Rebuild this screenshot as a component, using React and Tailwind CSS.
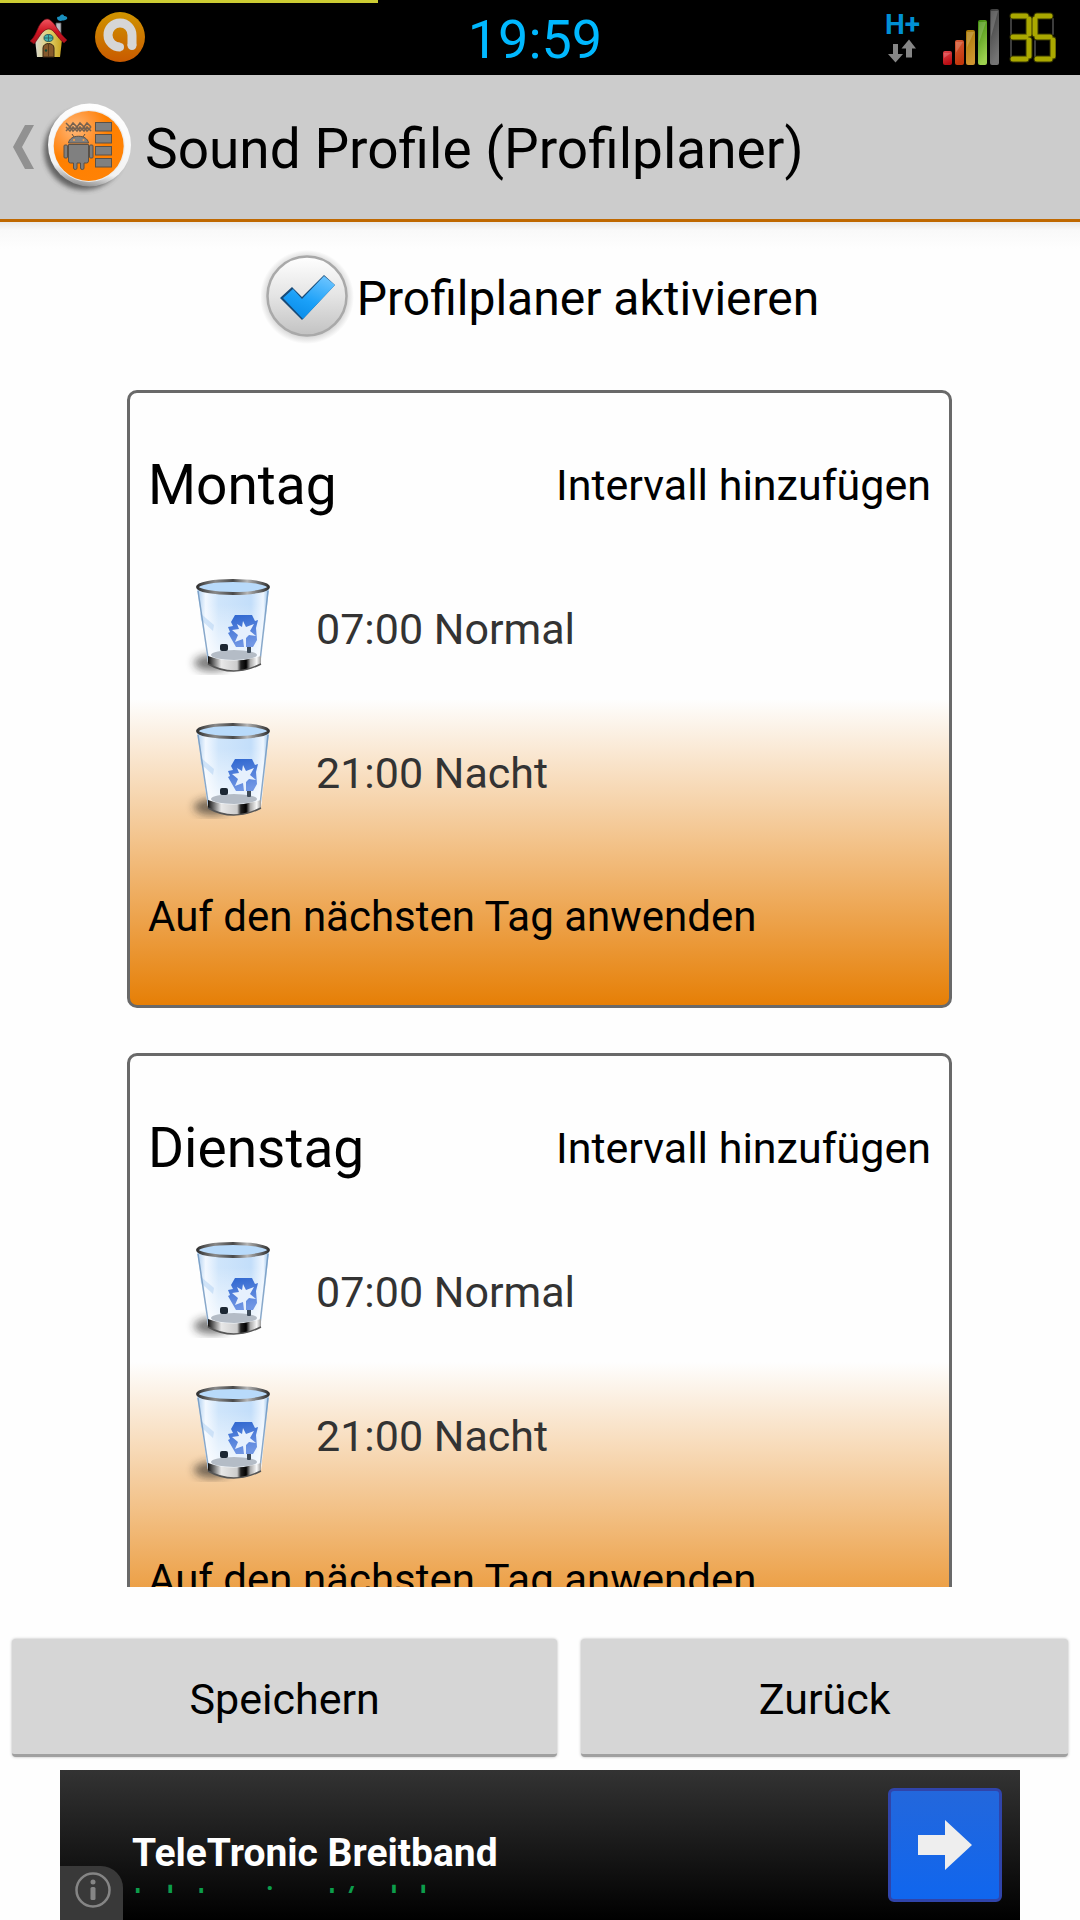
import React from "react";

const DAYS = [
  { name: "Montag", intervals: ["07:00 Normal", "21:00 Nacht"] },
  { name: "Dienstag", intervals: ["07:00 Normal", "21:00 Nacht"] },
];

function HouseIcon() {
  return (
    <svg className="h-12 w-10 shrink-0" viewBox="0 0 40 48" aria-hidden="true">
      <defs>
        <linearGradient id="wall" x1="0" x2="1" y1="0" y2="0">
          <stop offset="0" stopColor="#d8d8d0" />
          <stop offset="0.55" stopColor="#e0cf6a" />
          <stop offset="1" stopColor="#c9a21c" />
        </linearGradient>
        <linearGradient id="roof" x1="0" x2="0" y1="0" y2="1">
          <stop offset="0" stopColor="#ef5560" />
          <stop offset="0.5" stopColor="#cf1522" />
          <stop offset="1" stopColor="#a80f1a" />
        </linearGradient>
      </defs>
      <path d="M27 10l5 0 0 13-5-4z" fill="#b9bcc4" stroke="#555" strokeWidth="0.8" />
      <path d="M28 5c0-2 3-1 3-2 1-2 4-2 4 0 2 0 4 1 3 3-2 2-5 1-6 2-2 0-4-1-4-3z" fill="#1a8fbe" />
      <path d="M6 26L20 13l13 14-2 17H8z" fill="url(#wall)" />
      <path d="M1 28c5-4 6-9 9-15 3-5 7-9 11-6 5 3 8 12 17 20l-3 3c-7-5-10-15-16-14-6 1-9 9-14 15z" fill="url(#roof)" stroke="#6d0c14" strokeWidth="0.7" />
      <ellipse cx="19.500" cy="25" rx="4.500" ry="3.500" fill="#3fb3ae" stroke="#2b5a5c" strokeWidth="1" />
      <path d="M19.500 21.500v7M15 25h9" stroke="#2b5a5c" strokeWidth="0.8" />
      <path d="M14 44v-9c0-6 11-6 11 0v9z" fill="#85592b" stroke="#3a2712" strokeWidth="1" />
      <path d="M19.500 31v13" stroke="#5b3a18" strokeWidth="1" />
      <circle cx="17" cy="37.500" r="1.200" fill="#0f4a35" />
    </svg>
  );
}

function RoundAppIcon() {
  return (
    <svg className="size-[50px] shrink-0" viewBox="0 0 50 50" aria-hidden="true">
      <defs>
        <linearGradient id="amber" x1="0" x2="0" y1="0" y2="1">
          <stop offset="0" stopColor="#cf9400" />
          <stop offset="1" stopColor="#c95a00" />
        </linearGradient>
      </defs>
      <circle cx="25" cy="25" r="25" fill="url(#amber)" />
      <path d="M25.500 35A12 12 0 1 1 37 23.500v10" fill="none" stroke="#d6d6d6" strokeWidth="9" />
      <circle cx="25" cy="35" r="4" fill="#d6d6d6" />
      <circle cx="37" cy="33.500" r="4.500" fill="#d6d6d6" />
    </svg>
  );
}

function DataArrows() {
  return (
    <svg className="h-6 w-7" viewBox="0 0 28 24" fill="#868686" aria-hidden="true">
      <path d="M5 5h5v10h5L7.500 23.500 0 15h5z" />
      <path d="M18 18.500h6V9.500h4L21 0.500 13.500 9.500H18z" />
    </svg>
  );
}

function SignalIcon() {
  const bars = [
    [1, 42, 14, "#e0484c", "#b80c12"],
    [13, 31, 25, "#d85c38", "#c2370c"],
    [24, 21, 35, "#a87804", "#cf9530"],
    [36, 11, 45, "#3f8a0c", "#9cd04e"],
    [48, 0, 56, "#3a3a3a", "#747474"],
  ];
  return (
    <svg className="h-14 w-[58px] shrink-0" viewBox="0 0 58 56" role="img" aria-label="Signal">
      <defs>
        {bars.map(([x, , , a, b]) => (
          <linearGradient key={x} id={`bar${x}`} x1="0" x2="0.3" y1="0" y2="1">
            <stop offset="0" stopColor={a} />
            <stop offset="1" stopColor={b} />
          </linearGradient>
        ))}
      </defs>
      {bars.map(([x, y, h]) => (
        <g key={x}>
          <rect x={x} y={y} width="9" height={h} rx="2" fill={`url(#bar${x})`} />
          <path d={`M${x + 1} ${y + 2}h7L${x + 1} ${y + h * 0.5}z`} fill="#fff" opacity="0.18" />
        </g>
      ))}
    </svg>
  );
}

function BatteryDisplay() {
  const on = [
    [5, 4, 18, 4], [5, 25, 18, 25], [5, 47, 18, 47], [21, 7, 21, 22], [21, 28, 21, 44],
    [29, 4, 42, 4], [29, 25, 42, 25], [29, 47, 42, 47], [27, 7, 27, 22], [45, 28, 45, 44],
  ];
  const off = [
    [3, 7, 3, 22], [3, 28, 3, 44], [27, 29, 27, 44], [45, 7, 45, 22],
  ];
  return (
    <svg className="h-[51px] w-12 shrink-0" viewBox="0 0 48 51" role="img" aria-label="35 %">
      <g stroke="#3c3c3c" strokeWidth="2" strokeLinecap="round">
        {off.map(([a, b, c, d]) => <line key={`${a}-${b}`} x1={a} y1={b} x2={c} y2={d} />)}
      </g>
      <g stroke="#5b5a00" strokeWidth="7" strokeLinecap="round" opacity="0.6">
        {on.map(([a, b, c, d]) => <line key={`${a}-${b}`} x1={a} y1={b} x2={c} y2={d} />)}
      </g>
      <g stroke="#aaa800" strokeWidth="5" strokeLinecap="round">
        {on.map(([a, b, c, d]) => <line key={`${a}-${b}`} x1={a} y1={b} x2={c} y2={d} />)}
      </g>
    </svg>
  );
}

function StatusBar() {
  return (
    <div className="shrink-0 bg-black">
      <div className="h-[3px] w-[35%] bg-[#cccc33]" />
      <div className="grid h-[72px] grid-cols-[1fr_auto_1fr] items-center pb-1">
        <div className="flex items-center gap-[26px] pl-[29px]">
          <HouseIcon />
          <RoundAppIcon />
        </div>
        <time className="pt-[6px] pr-[10px] text-[54px] leading-[60px] text-[#00b8ff]">19:59</time>
        <div className="flex items-center justify-end gap-2 pr-6">
          <div className="mr-[14px] flex flex-col items-center">
            <span className="text-[28px] leading-7 font-bold text-[#0090d4]">H+</span>
            <DataArrows />
          </div>
          <SignalIcon />
          <BatteryDisplay />
        </div>
      </div>
    </div>
  );
}

function AppLogo() {
  return (
    <svg className="size-24" viewBox="0 2 96 96" aria-hidden="true">
      <defs>
        <radialGradient id="orange" cx="0.3" cy="0.25" r="0.8">
          <stop offset="0" stopColor="#ffb878" />
          <stop offset="0.35" stopColor="#ff9433" />
          <stop offset="0.6" stopColor="#ff8000" />
          <stop offset="1" stopColor="#ff8205" />
        </radialGradient>
        <linearGradient id="ring" x1="0.6" x2="0.4" y1="0" y2="1">
          <stop offset="0" stopColor="#ffffff" />
          <stop offset="0.8" stopColor="#f2f2f2" />
          <stop offset="1" stopColor="#8c8c8c" />
        </linearGradient>
        <filter id="soft" x="-20%" y="-20%" width="140%" height="140%">
          <feGaussianBlur stdDeviation="2.500" />
        </filter>
      </defs>
      <circle cx="44" cy="53" r="40" fill="#4a4a4a" opacity="0.8" filter="url(#soft)" />
      <circle cx="49.500" cy="48" r="41.500" fill="url(#ring)" />
      <circle cx="49" cy="49" r="36" fill="#ececec" />
      <circle cx="48.700" cy="49" r="35" fill="url(#orange)" />
      <g transform="translate(0 -1)">
        <g fill="none" stroke="#77624f" strokeWidth="1.500">
          <path d="M26 27l4 4 3-4 4 4 3-4 4 4 3-4 4 4" />
          <path d="M26 31l4 4 3-4 4 4 3-4 4 4 3-4 4 4" />
          <path d="M26 35l4-4 3 4 4-4 3 4 4-4 3 4 4-4" />
        </g>
        <g fill="#808080" stroke="#5a5148" strokeWidth="1">
          <rect x="55.500" y="26.500" width="16" height="8.500" />
          <rect x="55.500" y="38.500" width="16" height="8.500" />
          <rect x="55.500" y="50.500" width="16" height="8.500" />
          <rect x="55.500" y="62.500" width="16" height="8.500" />
          <path d="M28.500 47c1-9 19-9 20 0z" />
          <path d="M28.500 48.500h20V65q0 2-2 2H44v5q0 1.500-1.700 1.500T40.500 72v-5H37v5q0 1.500-1.700 1.500T33.500 72v-5h-3q-2 0-2-2z" />
          <rect x="24" y="49" width="3.500" height="13" rx="1" />
          <rect x="49.500" y="49" width="3.500" height="13" rx="1" />
          <path d="M32 38l2 3M45 38l-2 3" fill="none" />
        </g>
        <circle cx="34" cy="44" r="1" fill="#ff9e40" />
        <circle cx="43.500" cy="44" r="1" fill="#ff9e40" />
      </g>
    </svg>
  );
}

function TrashIcon({ id }) {
  return (
    <svg className="size-24" viewBox="0 0 96 96" aria-hidden="true">
      <defs>
        <linearGradient id={`${id}-body`} x1="0" x2="1" y1="0" y2="0">
          <stop offset="0" stopColor="#a9ccef" />
          <stop offset="0.12" stopColor="#f2f8ff" />
          <stop offset="0.3" stopColor="#cfe5fb" />
          <stop offset="0.75" stopColor="#c3defa" />
          <stop offset="0.92" stopColor="#eef6ff" />
          <stop offset="1" stopColor="#8fbde8" />
        </linearGradient>
        <linearGradient id={`${id}-fade`} x1="0" x2="0" y1="0" y2="1">
          <stop offset="0.2" stopColor="#fff" stopOpacity="0" />
          <stop offset="0.9" stopColor="#fff" stopOpacity="0.8" />
        </linearGradient>
        <linearGradient id={`${id}-rim`} x1="0" x2="1" y1="0" y2="0">
          <stop offset="0" stopColor="#333" />
          <stop offset="0.25" stopColor="#8a8a8a" />
          <stop offset="0.5" stopColor="#4a4a4a" />
          <stop offset="0.7" stopColor="#b5b5b5" />
          <stop offset="1" stopColor="#333" />
        </linearGradient>
        <linearGradient id={`${id}-base`} x1="0" x2="1" y1="0" y2="0">
          <stop offset="0" stopColor="#111" />
          <stop offset="0.12" stopColor="#777" />
          <stop offset="0.25" stopColor="#e8e8e8" />
          <stop offset="0.55" stopColor="#ccc" />
          <stop offset="0.62" stopColor="#222" />
          <stop offset="0.72" stopColor="#000" />
          <stop offset="0.8" stopColor="#aaa" />
          <stop offset="0.92" stopColor="#f8f8f8" />
          <stop offset="1" stopColor="#999" />
        </linearGradient>
        <linearGradient id={`${id}-blue`} x1="0" x2="0.2" y1="0" y2="1">
          <stop offset="0" stopColor="#2e66cf" />
          <stop offset="1" stopColor="#7096e4" />
        </linearGradient>
        <filter id={`${id}-blur`} x="-50%" y="-50%" width="200%" height="200%">
          <feGaussianBlur stdDeviation="4" />
        </filter>
      </defs>
      <ellipse cx="28" cy="84" rx="18" ry="8" fill="#222" opacity="0.6" filter={`url(#${id}-blur)`} />
      <path d="M13 9L24 84q26 13 53 0L85 9z" fill={`url(#${id}-body)`} />
      <path d="M13 9L24 84q26 13 53 0L85 9z" fill={`url(#${id}-fade)`} />
      <path d="M16 34l14 12-1 6-12-11z" fill="#b9d5f4" opacity="0.6" />
      <ellipse cx="50" cy="76" rx="23" ry="5" fill="#b4bcc6" />
      <path d="M14 12l10.500 70M84 12l-8 70" stroke="#6d93bd" strokeWidth="1.500" fill="none" opacity="0.8" />
      <rect x="36" y="65" width="8" height="7" rx="2" fill="#1c2733" />
      <rect x="63" y="66" width="4" height="8" rx="1" fill="#3d4a58" />
      <path d="M51 36h17l3 6 3-1-2 8 1 12-4 7H52l-8-14 2-1-2-5 5-1-2-4z" fill={`url(#${id}-blue)`} />
      <path d="M59 42l3 6 8-3-4 7 6 5-7-1-3 3 0 9h-2l-1-8-8 3 3-7-6-5 7-1-2-5 5 3z" fill="#e6f0fd" />
      <path d="M24 77q25 9 53 0v8q-25 14-53 0z" fill={`url(#${id}-base)`} />
      <path d="M24 85q25 14 53 0" fill="none" stroke="#555" strokeWidth="1.500" />
      <ellipse cx="49" cy="8" rx="35.500" ry="6.500" fill="#b8dafa" stroke={`url(#${id}-rim)`} strokeWidth="3" />
    </svg>
  );
}

function CheckMark() {
  return (
    <svg className="pointer-events-none col-start-1 row-start-1 size-24" viewBox="0 0 96 96" aria-hidden="true">
      <defs>
        <linearGradient id="disc" x1="0" x2="0" y1="0" y2="1">
          <stop offset="0" stopColor="#ffffff" />
          <stop offset="0.5" stopColor="#e4e4e4" />
          <stop offset="1" stopColor="#c2c2c2" />
        </linearGradient>
        <radialGradient id="halo">
          <stop offset="0.8" stopColor="#cfcfcf" />
          <stop offset="1" stopColor="#cfcfcf" stopOpacity="0" />
        </radialGradient>
        <linearGradient id="tick" x1="0.8" x2="0.3" y1="0" y2="1">
          <stop offset="0" stopColor="#6cc4ff" />
          <stop offset="0.6" stopColor="#1aa0f8" />
          <stop offset="1" stopColor="#0a8ce8" />
        </linearGradient>
      </defs>
      <circle cx="46" cy="48" r="47" fill="url(#halo)" />
      <circle cx="46" cy="47" r="39.500" fill="url(#disc)" stroke="#a9a9a9" strokeWidth="2.500" />
      <path d="M19 49l12-11 10 10 22-22 11 10-33 35z" fill="#174a78" />
      <path d="M22 49l10-9 9 10 22-23 11 9-32 34z" fill="url(#tick)" />
    </svg>
  );
}

function DayCard({ day }) {
  return (
    <section className="rounded-[10px] border-[3px] border-[#696969] bg-linear-to-b/srgb from-[#fefefe] from-50% to-[#e67f06] p-[18px]">
      <div className="flex h-36 items-center justify-between pt-1">
        <h2 className="text-[55px] leading-[64px]">{day.name}</h2>
        <button type="button" className="text-[43px] leading-[50px]">Intervall hinzufügen</button>
      </div>
      <ul>
        {day.intervals.map((text, i) => (
          <li key={text} className="flex h-36 items-center gap-9 pl-9">
            <button type="button" aria-label={`${text} löschen`}>
              <TrashIcon id={`${day.name}${i}`} />
            </button>
            <span className="pt-1 text-[43px] leading-[50px] text-[#333]">{text}</span>
          </li>
        ))}
      </ul>
      <div className="flex h-36 items-center pt-1">
        <button type="button" className="text-[42px] leading-[50px]">Auf den nächsten Tag anwenden</button>
      </div>
    </section>
  );
}

function ActionButton({ children }) {
  return (
    <button
      type="button"
      className="h-[118px] flex-auto rounded-[4px] border-b-[3px] border-[#a0a0a0] bg-[#d6d6d6] pt-1 text-[43px] leading-[50px] shadow-[0_0_3px_rgba(0,0,0,0.3)]"
    >
      {children}
    </button>
  );
}

function AdBanner() {
  return (
    <aside className="relative mx-[60px] mt-[13px] flex h-[150px] items-start justify-between bg-linear-to-b/srgb from-[#333] to-black pr-[18px] pl-[72px]">
      <div className="pt-[59px]">
        <div className="text-[39px] leading-[48px] font-bold text-white">TeleTronic Breitband</div>
        <div className="h-4 overflow-hidden text-[39px] leading-[48px] text-[#0c9d4b]">teletronic.at/adsl</div>
      </div>
      <a
        href="#anzeige"
        aria-label="Anzeige öffnen"
        className="mt-[18px] flex size-[114px] items-center justify-center rounded-[6px] border-[3px] border-[#3044aa] bg-linear-to-b/srgb from-[#2367dc] to-[#1066ee]"
      >
        <svg className="h-[50px] w-[54px]" viewBox="0 0 54 50" aria-hidden="true">
          <path d="M0 15h27V0l27 25-27 25V35H0z" fill="#eee" />
        </svg>
      </a>
      <button
        type="button"
        aria-label="Info zur Anzeige"
        className="absolute bottom-0 left-0 flex h-[54px] w-[63px] justify-center rounded-tr-[22px] bg-[#393939] pt-[6px] pl-[2px]"
      >
        <svg className="size-9" viewBox="0 0 36 36" aria-hidden="true">
          <circle cx="18" cy="18" r="16.500" fill="none" stroke="#858585" strokeWidth="2.500" />
          <circle cx="18" cy="10" r="2.500" fill="#858585" />
          <rect x="15.500" y="15" width="5" height="13" rx="1.500" fill="#858585" />
        </svg>
      </button>
    </aside>
  );
}

export default function App() {
  return (
    <div className="flex h-screen flex-col overflow-hidden bg-[#fefefe] font-[Roboto,sans-serif] text-black">
      <StatusBar />
      <header className="flex h-[147px] shrink-0 items-center gap-[9px] border-b-[3px] border-[#bf6800] bg-[#ccc] pl-3">
        <button type="button" aria-label="Zurück" className="flex items-center gap-[6px]">
          <svg className="h-11 w-[22px]" viewBox="0 0 22 44" aria-hidden="true">
            <path d="M13 0h9L10 22l12 22h-9L1 22z" fill="#919191" />
          </svg>
          <AppLogo />
        </button>
        <h1 className="pt-1 text-[55px] leading-[64px]">Sound Profile (Profilplaner)</h1>
      </header>
      <div className="h-[27px] shrink-0 bg-linear-to-b/srgb from-[#e9e9e9] via-[#f9f9f9] via-30% to-[#fefefe]" />
      <label className="flex shrink-0 items-center justify-center text-[48px] leading-[56px]">
        <span className="grid">
          <input type="checkbox" defaultChecked className="col-start-1 row-start-1 size-24 appearance-none" />
          <CheckMark />
        </span>
        <span className="pt-1">Profilplaner aktivieren</span>
      </label>
      <main className="mt-[45px] flex min-h-0 flex-1 flex-col gap-[45px] overflow-y-auto pr-32 pl-[127px] [scrollbar-width:none]">
        {DAYS.map((day) => (
          <DayCard key={day.name} day={day} />
        ))}
      </main>
      <footer className="mt-[52px] shrink-0">
        <div className="flex gap-6 px-3">
          <ActionButton>Speichern</ActionButton>
          <ActionButton>Zurück</ActionButton>
        </div>
        <AdBanner />
      </footer>
    </div>
  );
}
